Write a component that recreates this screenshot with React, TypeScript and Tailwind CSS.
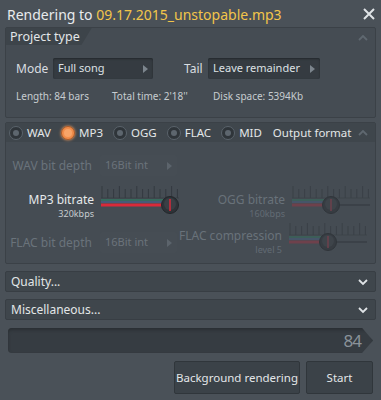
import React from 'react';

const font = { fontFamily: '"Noto Sans", "Open Sans", sans-serif' };

function Chevron({ up, faint }: { up?: boolean; faint?: boolean }) {
  return (
    <svg width="12" height="8" viewBox="0 0 12 8">
      <path
        d={up ? 'M2 6 L6 2 L10 6' : 'M2 2 L6 6 L10 2'}
        fill="none"
        stroke={faint ? '#5f6870' : '#dfe3e6'}
        strokeWidth="1.8"
      />
    </svg>
  );
}

function Dropdown({ label, width, disabled }: { label: string; width: string; disabled?: boolean }) {
  return (
    <div
      className={`${width} h-[21px] flex items-center justify-between pl-[5px] pr-[5px] rounded-[2px] ${
        disabled ? 'bg-[#464d54] text-[#6b737b]' : 'bg-[#353b41] text-[#dde1e4] shadow-[inset_0_1px_2px_#23282c]'
      }`}
    >
      <span className="text-[11px] whitespace-nowrap">{label}</span>
      <svg width="5" height="8" viewBox="0 0 5 8">
        <path d="M0 0 L5 4 L0 8 Z" fill={disabled ? '#5c646c' : '#7c858d'} />
      </svg>
    </div>
  );
}

function Radio({ label, on }: { label: string; on?: boolean }) {
  return (
    <div className="flex items-center gap-[4px]">
      <div
        className={`w-[14px] h-[14px] rounded-full flex items-center justify-center ${
          on ? 'bg-[#f08c4a] shadow-[0_0_3px_#f6a060] border border-[#a85a2a]' : 'bg-[#2f353a] border border-[#5a636b]'
        }`}
      >
        {!on && <div className="w-[6px] h-[6px] rounded-full bg-[#5d666e]" />}
        {on && <div className="w-[8px] h-[8px] rounded-full bg-[#f7a468]" />}
      </div>
      <span className="text-[11.5px] text-[#e3e6e8]">{label}</span>
    </div>
  );
}

function Slider({ pos, dim }: { pos: number; dim?: boolean }) {
  const ticks = Array.from({ length: 14 }, (_, i) => i);
  const red = dim ? '#8a3a48' : '#d92a3a';
  return (
    <svg width="80" height="32" viewBox="0 0 80 32" className={dim ? 'opacity-60' : ''}>
      <line x1="1" y1="14" x2="79" y2="14" stroke="#3a4046" strokeWidth="1" />
      {ticks.map((i) => (
        <line key={i} x1={2 + i * 5.8} y1={i % 3 === 0 ? 2 : 5} x2={2 + i * 5.8} y2="14" stroke="#343a40" strokeWidth="1" />
      ))}
      <line x1="1" y1="16" x2={pos} y2="16" stroke="#2d8a6a" strokeWidth="1" />
      <line x1="1" y1="18" x2={pos} y2="18" stroke="#4a6aa0" strokeWidth="1" />
      <line x1="1" y1="21" x2={pos} y2="21" stroke={red} strokeWidth="3" />
      <line x1={pos} y1="21" x2="79" y2="21" stroke="#353b41" strokeWidth="2" />
      <circle cx={pos} cy="21" r="8.5" fill="#2e3338" stroke="#23272b" />
      <circle cx={pos} cy="20" r="6" fill="#3a3f45" />
      <line x1={pos} y1="15" x2={pos} y2="27" stroke={red} strokeWidth="1.5" />
    </svg>
  );
}

export default function App() {
  return (
    <div className="w-[381px] h-[400px] bg-[#4a5158] text-[#d9dde0] flex flex-col" style={font}>
      <div className="h-[27px] flex items-center justify-between pl-[7px] pr-[6px] pt-[1px]">
        <div className="text-[14px] text-[#e8ebed]">
          Rendering to <span className="text-[#f2c54a]">09.17.2015_unstopable.mp3</span>
        </div>
        <svg width="12" height="12" viewBox="0 0 12 12">
          <path d="M1 1 L11 11 M11 1 L1 11" stroke="#dfe3e6" strokeWidth="2" />
        </svg>
      </div>

      <div className="mx-[5px] h-[91px] bg-[#454c53] border border-[#3b4147] rounded-[2px] flex flex-col">
        <div className="flex items-start justify-between">
          <div className="h-[17px] pl-[4px] pr-[12px] bg-[#3d444a] text-[12.5px] leading-[17px] text-[#e3e6e8] [clip-path:polygon(0_0,100%_0,88%_100%,0_100%)]">
            Project type
          </div>
          <div className="pr-[6px] pt-[6px]">
            <Chevron up faint />
          </div>
        </div>
        <div className="flex items-center h-[21px] mt-[13px] pl-[10px]">
          <span className="text-[12px] w-[37px]">Mode</span>
          <Dropdown label="Full song" width="w-[100px]" />
          <span className="text-[12px] ml-[31px] w-[24px]">Tail</span>
          <Dropdown label="Leave remainder" width="w-[112px]" />
        </div>
        <div className="flex items-center mt-[10px] pl-[10px] text-[10px] text-[#c7ccd0]">
          <span className="w-[96px]">Length: 84 bars</span>
          <span className="w-[101px]">Total time: 2'18''</span>
          <span>Disk space: 5394Kb</span>
        </div>
      </div>

      <div className="mx-[5px] mt-[4px] h-[142px] bg-[#454c53] border border-[#3b4147] rounded-[2px] flex flex-col">
        <div className="flex items-center justify-between h-[19px] bg-[#3f464c]">
          <div className="flex items-center gap-[10px] pl-[3px] whitespace-nowrap">
            <Radio label="WAV" />
            <Radio label="MP3" on />
            <Radio label="OGG" />
            <Radio label="FLAC" />
            <Radio label="MID" />
            <span className="text-[11.5px] text-[#e3e6e8] ml-[1px]">Output format</span>
          </div>
          <div className="pr-[6px]">
            <Chevron up faint />
          </div>
        </div>

        <div className="flex items-center h-[21px] mt-[13px]">
          <span className="w-[94px] text-right pr-[8px] text-[12px] text-[#6a737b] whitespace-nowrap">WAV bit depth</span>
          <Dropdown label="16Bit int" width="w-[77px]" disabled />
        </div>

        <div className="flex mt-[5px] h-[38px]">
          <div className="w-[94px] pr-[6px] flex flex-col items-end pt-[12px] whitespace-nowrap">
            <span className="text-[12px] leading-[14px] text-[#e6e9eb]">MP3 bitrate</span>
            <span className="text-[9px] leading-[13px] text-[#c7ccd0]">320kbps</span>
          </div>
          <div className="pt-[3px]">
            <Slider pos={70} />
          </div>
          <div className="w-[111px] pr-[6px] flex flex-col items-end pt-[12px] whitespace-nowrap">
            <span className="text-[12px] leading-[14px] text-[#69727a]">OGG bitrate</span>
            <span className="text-[9px] leading-[13px] text-[#626b73]">160kbps</span>
          </div>
          <div className="pt-[3px]">
            <Slider pos={40} dim />
          </div>
        </div>

        <div className="flex mt-[6px]">
          <div className="flex items-center h-[21px] mt-[7px]">
            <span className="w-[94px] text-right pr-[8px] text-[12px] text-[#6a737b] whitespace-nowrap">FLAC bit depth</span>
            <Dropdown label="16Bit int" width="w-[77px]" disabled />
          </div>
          <div className="w-[111px] pr-[6px] flex flex-col items-end pt-[4px] whitespace-nowrap">
            <span className="text-[12px] leading-[14px] text-[#69727a]">FLAC compression</span>
            <span className="text-[9px] leading-[13px] text-[#626b73]">level 5</span>
          </div>
          <div className="-mt-[4px]">
            <Slider pos={40} dim />
          </div>
        </div>
      </div>

      <div className="mx-[5px] mt-[7px] h-[21px] bg-[#3f464c] border border-[#383e44] rounded-[2px] flex items-center justify-between pl-[5px] pr-[6px]">
        <span className="text-[12px] text-[#e3e6e8]">Quality...</span>
        <Chevron />
      </div>
      <div className="mx-[5px] mt-[7px] h-[21px] bg-[#3f464c] border border-[#383e44] rounded-[2px] flex items-center justify-between pl-[5px] pr-[6px]">
        <span className="text-[12px] text-[#e3e6e8]">Miscellaneous...</span>
        <Chevron />
      </div>

      <div className="mx-[8px] mt-[8px] h-[25px] bg-[#363c42] rounded-l-[4px] flex items-center justify-end pr-[12px] shadow-[inset_0_2px_3px_#2a2f33] [clip-path:polygon(0_0,97%_0,100%_50%,97%_100%,0_100%)]">
        <span className="text-[17px] text-[#8a9299] tracking-[-1px]">84</span>
      </div>

      <div className="flex justify-end gap-[6px] mt-[8px] pr-[8px]">
        <div className="w-[126px] h-[33px] bg-[#3b4248] border border-[#30363b] rounded-[2px] flex items-center justify-center text-[11.5px] text-[#e3e6e8] whitespace-nowrap">
          Background rendering
        </div>
        <div className="w-[67px] h-[33px] bg-[#3b4248] border border-[#30363b] rounded-[2px] flex items-center justify-center text-[11.5px] text-[#e3e6e8]">
          Start
        </div>
      </div>
    </div>
  );
}
